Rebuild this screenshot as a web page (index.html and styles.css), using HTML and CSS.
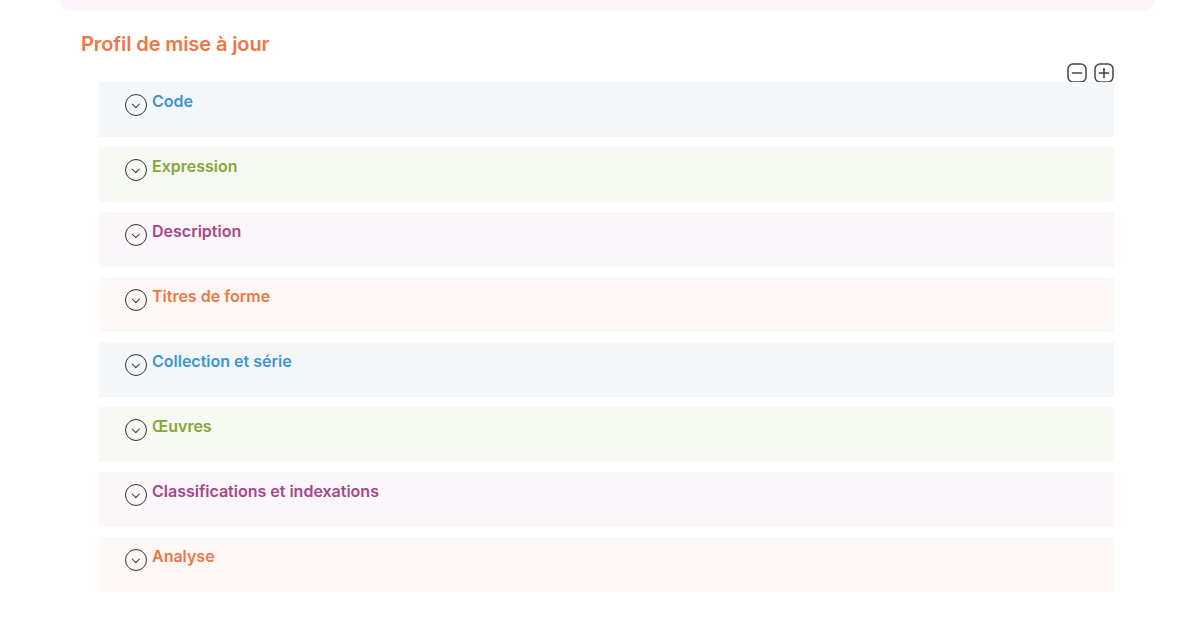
FILE: index.html
```html
<!DOCTYPE html>
<html lang="fr">
<head>
<meta charset="utf-8">
<link rel="stylesheet" href="styles.css">
</head>
<body>
<div class="topcard"></div>
<section class="profile">
  <h2 class="title">Profil de mise à jour</h2>
  <div class="tools">
    <button class="tool" aria-label="Réduire">
      <svg viewBox="0 0 20 20" width="20" height="20"><rect x="1" y="1" width="18" height="18" rx="5" fill="none" stroke="#444" stroke-width="1.5"/><path d="M5.5 10h9" stroke="#444" stroke-width="1.6" stroke-linecap="round"/></svg>
    </button>
    <button class="tool" aria-label="Développer">
      <svg viewBox="0 0 20 20" width="20" height="20"><rect x="1" y="1" width="18" height="18" rx="5" fill="none" stroke="#444" stroke-width="1.5"/><path d="M5.5 10h9M10 5.5v9" stroke="#444" stroke-width="1.6" stroke-linecap="round"/></svg>
    </button>
  </div>
  <div class="rows">
    <div class="row blue"><span class="chev"></span><span class="label">Code</span></div>
    <div class="row green"><span class="chev"></span><span class="label">Expression</span></div>
    <div class="row pink"><span class="chev"></span><span class="label">Description</span></div>
    <div class="row orange"><span class="chev"></span><span class="label">Titres de forme</span></div>
    <div class="row blue"><span class="chev"></span><span class="label">Collection et série</span></div>
    <div class="row green"><span class="chev"></span><span class="label">Œuvres</span></div>
    <div class="row pink"><span class="chev"></span><span class="label">Classifications et indexations</span></div>
    <div class="row orange"><span class="chev"></span><span class="label">Analyse</span></div>
  </div>
</section>
</body>
</html>
```

FILE: styles.css
```css
* { box-sizing: border-box; }
html, body { margin: 0; padding: 0; background: #fff; }
body {
  font-family: "Inter", "Noto Sans", "Liberation Sans", sans-serif;
  width: 1187px;
}
.topcard {
  margin: 0 32px 0 60px;
  height: 11px;
  background: #fcf6fa;
  border-radius: 0 0 14px 14px;
}
.profile {
  padding: 0 73px 0 81px;
}
.title {
  margin: 21px 0 0 0;
  font-size: 20px;
  line-height: 24px;
  font-weight: 600;
  color: #ef7646;
  letter-spacing: -0.1px;
}
.tools {
  display: flex;
  justify-content: flex-end;
  gap: 7px;
  margin-top: 7px;
  height: 19px;
}
.tool {
  border: 0;
  padding: 0;
  margin: 0;
  background: none;
  width: 20px;
  height: 20px;
  display: block;
  cursor: pointer;
}
.tool svg { display: block; }
.rows {
  margin-left: 18px;
  display: flex;
  flex-direction: column;
  gap: 10px;
}
.row {
  height: 55px;
  padding: 12px 0 0 26px;
  display: flex;
  align-items: flex-start;
}
.chev {
  width: 22px;
  height: 22px;
  border: 1.2px solid #333;
  border-radius: 50%;
  position: relative;
  flex: none;
}
.chev::after {
  content: "";
  position: absolute;
  left: 7.2px;
  top: 5.6px;
  width: 4.6px;
  height: 4.6px;
  border-right: 1.2px solid #333;
  border-bottom: 1.2px solid #333;
  transform: rotate(45deg);
}
.label {
  margin-left: 5px;
  margin-top: -3px;
  font-size: 16px;
  line-height: 20px;
  font-weight: 600;
}
.blue { background: #f3f7fa; }
.blue .label { color: #3d96d3; }
.green { background: #f7f9f3; }
.green .label { color: #8aa53a; }
.pink { background: #fbf6fa; }
.pink .label { color: #a5478d; }
.orange { background: #fdf8f6; }
.orange .label { color: #ef7646; }
```
